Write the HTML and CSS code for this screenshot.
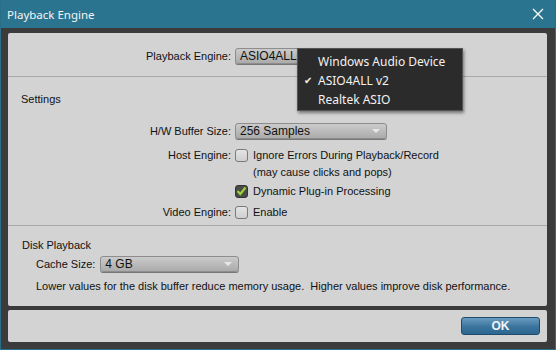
FILE: index.html
```html
<!DOCTYPE html>
<html lang="en">
  <head>
    <meta charset="UTF-8" />
    <title>Playback Engine</title>
    <link rel="stylesheet" href="styles.css">
  </head>
  <body>
    <div class="window">
      <!-- title bar -->
      <div class="titlebar">
        <span class="title">Playback Engine</span>
        <svg class="close" width="12" height="12" viewBox="0 0 12 12">
          <path d="M1 1 L11 11 M11 1 L1 11" stroke="#ffffff" stroke-width="1.3" fill="none" />
        </svg>
      </div>
      <!-- main panel -->
      <div class="panel main">
        <div class="row engine-row">
          <span class="lbl">Playback Engine:</span>
          <div class="select engine-select">ASIO4ALL v2<i class="arrow"></i></div>
        </div>
        <div class="menu">
          <div class="item">Windows Audio Device</div>
          <div class="item checked">ASIO4ALL v2</div>
          <div class="item">Realtek ASIO</div>
        </div>

        <div class="group settings">
          <div class="group-title">Settings</div>
          <div class="row hw-row">
            <span class="lbl">H/W Buffer Size:</span>
            <div class="select">256 Samples<i class="arrow"></i></div>
          </div>
          <div class="row host-row">
            <span class="lbl">Host Engine:</span>
            <span class="check"></span>
            <span class="txt">Ignore Errors During Playback/Record</span>
          </div>
          <div class="row note-row">
            <span class="lbl"></span>
            <span class="txt">(may cause clicks and pops)</span>
          </div>
          <div class="row dyn-row">
            <span class="lbl"></span>
            <span class="check on">
              <svg width="11" height="10" viewBox="0 0 11 10">
                <path d="M1.5 5 L4.3 8 L9.5 1.5" stroke="#9bd23a" stroke-width="2.2" fill="none" />
              </svg>
            </span>
            <span class="txt">Dynamic Plug-in Processing</span>
          </div>
          <div class="row video-row">
            <span class="lbl">Video Engine:</span>
            <span class="check"></span>
            <span class="txt">Enable</span>
          </div>
        </div>

        <div class="group disk">
          <div class="group-title">Disk Playback</div>
          <div class="cache-row">
            <span>Cache Size:</span>
            <div class="select cache-select">4 GB<i class="arrow"></i></div>
          </div>
          <div class="hint">Lower values for the disk buffer reduce memory usage.&nbsp; Higher values improve disk performance.</div>
        </div>
      </div>
      <!-- button bar -->
      <div class="panel footer">
        <button class="ok">OK</button>
      </div>
    </div>
  </body>
</html>
```

FILE: styles.css
```css
* {
  padding: 0;
  margin: 0;
  box-sizing: border-box;
}
body {
  font-family: "Liberation Sans", Arial, sans-serif;
  font-size: 11px;
  color: #111;
  background: #3b3b3b;
}
.window {
  width: 556px;
  height: 350px;
  background: #3b3b3b;
  border: 1px solid #2a6f8a;
  border-top: none;
}
.titlebar {
  height: 28px;
  background: #2b7490;
  display: flex;
  align-items: center;
  justify-content: space-between;
  padding: 0 11px 0 6px;
}
.title {
  font-family: "Noto Sans", sans-serif;
  font-size: 11.5px;
  color: #f4f4f4;
}
.panel {
  background: #d3d3d3;
  margin-left: 7px;
  width: 539px;
  border-radius: 2px;
}
.main {
  position: relative;
  margin-top: 5px;
  height: 273px;
  padding-top: 15px;
}
.row {
  display: flex;
  align-items: center;
  height: 16px;
}
.lbl {
  width: 227px;
  text-align: right;
  padding-right: 4px;
  flex-shrink: 0;
}
.select {
  position: relative;
  height: 16px;
  width: 152px;
  padding: 0 4px;
  font-size: 12px;
  line-height: 15px;
  color: #111;
  border: 1px solid #8d8d8d;
  border-radius: 3px;
  background: linear-gradient(#cbcbcb, #ababab);
  box-shadow: 0 1px 0 #777;
}
.arrow {
  position: absolute;
  right: 6px;
  top: 5px;
  width: 0;
  height: 0;
  border-left: 4px solid transparent;
  border-right: 4px solid transparent;
  border-top: 4px solid #e8e8e8;
}
.engine-row {
  padding-bottom: 13px;
  height: 29px;
  border-bottom: 1px solid #a9a9a9;
}
.menu {
  position: absolute;
  left: 289px;
  top: 15px;
  width: 166px;
  height: 63px;
  background: #2b2b2b;
  border: 1px solid #555;
  box-shadow: 1px 2px 3px rgba(0, 0, 0, 0.45);
  padding-top: 3px;
  font-family: "Noto Sans", sans-serif;
  font-size: 12px;
  color: #f2f2f2;
}
.item {
  position: relative;
  height: 19px;
  line-height: 19px;
  padding-left: 20px;
}
.checked::before {
  content: "\2714";
  position: absolute;
  left: 6px;
  font-size: 10px;
}
.group-title {
  padding-left: 13px;
  height: 14px;
  line-height: 14px;
}
.settings {
  padding-top: 15px;
  height: 149px;
  border-bottom: 1px solid #a9a9a9;
}
.hw-row {
  margin-top: 17px;
}
.host-row {
  margin-top: 8px;
}
.note-row {
  margin-top: 1px;
}
.dyn-row {
  margin-top: 3px;
}
.video-row {
  margin-top: 5px;
}
.check {
  width: 13px;
  height: 13px;
  border: 1px solid #7a7a7a;
  border-radius: 3px;
  background: linear-gradient(#e4e4e4, #cfcfcf);
  margin-right: 5px;
  display: flex;
  align-items: center;
  justify-content: center;
}
.check.on {
  background: #4a4a4a;
  border-color: #333;
}
.note-row .txt {
  padding-left: 18px;
}
.disk {
  padding-top: 12px;
}
.disk .group-title {
  padding-left: 14px;
}
.cache-row {
  display: flex;
  align-items: center;
  padding-left: 28px;
  margin-top: 4px;
  gap: 5px;
}
.cache-select {
  width: 139px;
}
.hint {
  padding-left: 28px;
  margin-top: 7px;
  line-height: 14px;
}
.footer {
  margin-top: 4px;
  height: 32px;
  display: flex;
  align-items: center;
  justify-content: flex-end;
  padding-right: 7px;
}
.ok {
  width: 79px;
  height: 18px;
  font-family: "Liberation Sans", Arial, sans-serif;
  font-weight: bold;
  font-size: 12px;
  color: #f0f4f8;
  border: 1px solid #1f4c6c;
  border-radius: 3px;
  background: linear-gradient(#6a9cc0, #3a749c 55%, #2d6690);
}
```
